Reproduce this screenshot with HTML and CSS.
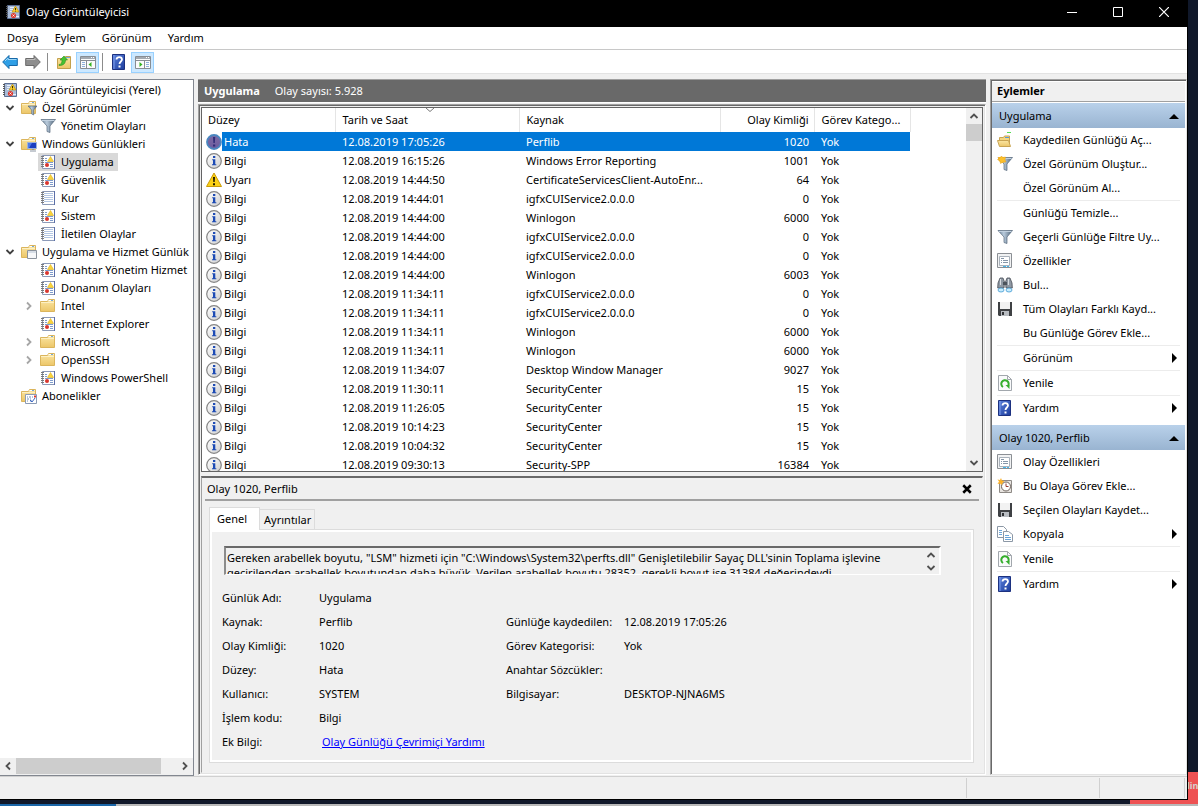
FILE: index.html
```html
<!DOCTYPE html>
<html lang="tr">
<head>
    <meta charset="UTF-8">
    <meta name="viewport" content="width=device-width, initial-scale=1.0">
    <title>Olay Görüntüleyicisi</title>
    <link rel="stylesheet" href="styles.css">
</head>
<body>
    <!-- Icon set -->
    <svg class="sprite" aria-hidden="true">
        <defs>
            <linearGradient id="gFolder" x1="0" y1="0" x2="0" y2="1"><stop offset="0" stop-color="#fbe6a4"/><stop offset="1" stop-color="#ecc668"/></linearGradient>
            <linearGradient id="gSteel" x1="0" y1="0" x2="1" y2="0"><stop offset="0" stop-color="#6d8296"/><stop offset=".4" stop-color="#b9cbdc"/><stop offset="1" stop-color="#4f6377"/></linearGradient>
            <linearGradient id="gBlue" x1="0" y1="0" x2="1" y2="1"><stop offset="0" stop-color="#5b82dc"/><stop offset="1" stop-color="#1c3c9c"/></linearGradient>
            <linearGradient id="gInfo" x1="0" y1="0" x2="1" y2="1"><stop offset="0" stop-color="#ffffff"/><stop offset="1" stop-color="#cfcfcf"/></linearGradient>
            <linearGradient id="gError" x1="0" y1="0" x2="0" y2="1"><stop offset="0" stop-color="#7d6ba6"/><stop offset="1" stop-color="#6b5a9e"/></linearGradient>
        </defs>
        <symbol id="viewer" viewBox="0 0 16 16">
            <path d="M2.500 1.500h12v13h-12z" fill="#a9bcd8" stroke="#5c6f93"/>
            <path d="M5 3.500h4M5 5.500h3M5 7.500h2M11 12.500h3" stroke="#e8effa"/>
            <path d="M1 2.500h2M1 4.500h2M1 6.500h2M1 8.500h2M1 10.500h2M1 12.500h2" stroke="#555"/>
            <path d="M10.500 2L14 8H7z" fill="#fbd02c" stroke="#b98b0a" stroke-width=".6"/>
            <path d="M10.500 4v2M10.500 6.700v.8" stroke="#3b2e00"/>
            <circle cx="8.500" cy="11.500" r="2.600" fill="#dc3c31"/>
            <path d="M7.500 10.500l2 2m0-2l-2 2" stroke="#fff" stroke-width=".8"/>
        </symbol>
        <symbol id="log" viewBox="0 0 16 16">
            <path d="M2.500 1.500h12v13h-12z" fill="#fff" stroke="#8c9ab8"/>
            <path d="M14.500 1v14" stroke="#5b6fa8"/>
            <path d="M4 3.500h9M4 5.500h9M4 7.500h9M4 9.500h9M4 11.500h9" stroke="#b4c7e4"/>
            <path d="M1 2.500h3M1 4.500h3M1 6.500h3M1 8.500h3M1 10.500h3M1 12.500h3" stroke="#7a7a7a"/>
        </symbol>
        <symbol id="logAlert" viewBox="0 0 16 16">
            <path d="M2.500 1.500h12v13h-12z" fill="#fff" stroke="#8c9ab8"/>
            <path d="M14.500 1v14" stroke="#5b6fa8"/>
            <path d="M5 4.500h2M5 6.500h2M5 8.500h8M10 10.500h3M10 12.500h3" stroke="#7f9ccc"/>
            <path d="M1 2.500h3M1 4.500h3M1 6.500h3M1 8.500h3M1 10.500h3M1 12.500h3" stroke="#7a7a7a"/>
            <path d="M10.500 2.500L13.500 7.500H7.500z" fill="#fbd53a" stroke="#d9ad22" stroke-width=".6"/>
            <circle cx="7" cy="11" r="2" fill="#d9362d"/>
        </symbol>
        <symbol id="folder" viewBox="0 0 16 16">
            <path d="M.500 3.500h7l1-2h6v12h-14z" fill="url(#gFolder)" stroke="#dbb55c"/>
            <path d="M8.500 2.500h5" stroke="#fff"/><path d="M11 2.500h2" stroke="#74a8d8"/>
            <path d="M1 4.500h13" stroke="#fdf0c4"/>
        </symbol>
        <symbol id="funnel" viewBox="0 0 16 16">
            <path d="M1 1.500h14.500L10 8v6.500l-3-1V8z" fill="url(#gSteel)" stroke="#56697c" stroke-width=".7"/>
            <path d="M2 2.500h12.500" stroke="#c3d2e0"/>
        </symbol>
        <symbol id="folderFunnel" viewBox="0 0 16 16">
            <use href="#folder"/>
            <path d="M7 6h9l-3.300 4v5l-2-1v-4z" fill="url(#gSteel)" stroke="#4f6377" stroke-width=".6"/>
        </symbol>
        <symbol id="folderScreen" viewBox="0 0 16 16">
            <use href="#folder"/>
            <path d="M6.500 6.500h9v6h-9z" fill="#1b3fc0" stroke="#9fb4d8"/>
            <path d="M7 7h4l-3 5H7z" fill="#4e7bea"/>
            <path d="M9 15h6M11 13.500h2" stroke="#8c96a3"/>
        </symbol>
        <symbol id="folderWindow" viewBox="0 0 16 16">
            <use href="#folder"/>
            <path d="M6.500 6.500h9v8h-9z" fill="#f7f8fa" stroke="#8b939d"/>
            <path d="M7 8h8" stroke="#b7c3d2"/>
        </symbol>
        <symbol id="folderSub" viewBox="0 0 16 16">
            <use href="#folder"/>
            <path d="M4.500 6.500h11v9h-11z" fill="#fff" stroke="#8b9bb5"/>
            <path d="M6 9h1m1 0h2m1 0h1M6 11h2m1 0h1M6 13h1m2 0h2" stroke="#6f8dbb"/>
            <path d="M13 7.500h2v2h-2z" fill="#df3b30"/>
            <path d="M9 12l2 2 3-4" fill="none" stroke="#3a66c4"/>
        </symbol>
        <symbol id="arrowLeft" viewBox="0 0 16 16">
            <path d="M.7 8L7 1.500v3h8.300v7H7v3z" fill="#2f9fe6" stroke="#1668a8"/><path d="M3 7L6 4v1.500h8.500" fill="none" stroke="#9fd8f8"/>
        </symbol>
        <symbol id="arrowRight" viewBox="0 0 16 16">
            <path d="M15.300 8L9 1.500v3H.7v7H9v3z" fill="#8e8e8e" stroke="#6b6b6b"/><path d="M1.500 5.500H10V4" fill="none" stroke="#bdbdbd"/>
        </symbol>
        <symbol id="folderUp" viewBox="0 0 16 16">
            <path d="M1.500 4.500h7l1-2h5v12h-13z" fill="url(#gFolder)" stroke="#c3a04c"/>
            <path d="M10 3.500h4" stroke="#74a8d8"/>
            <path d="M3 10.500c2.500 0 3-2 3-4.500H4L8 2l3.500 4H9.500c0 3.500-2 5.500-6.500 5.500z" fill="#45c233" stroke="#2b8d1f" stroke-width=".6"/>
        </symbol>
        <symbol id="paneLeft" viewBox="0 0 16 16">
            <path d="M.5 2.500h15v12H.5z" fill="#fbfbfb" stroke="#878d94"/><path d="M1 4h14" stroke="#a3a9b0" stroke-width="2"/>
            <path d="M11 3.500h1m1 0h1" stroke="#fff"/><path d="M1 6.500h14M6.500 6v8" stroke="#878d94"/>
            <path d="M2 8.500h3M2 10.500h3M2 12.500h3" stroke="#8db0dc"/><path d="M11.500 8v5l-3-2.500z" fill="#34b321"/>
        </symbol>
        <symbol id="paneRight" viewBox="0 0 16 16">
            <path d="M.5 2.500h15v12H.5z" fill="#fbfbfb" stroke="#878d94"/><path d="M1 4h14" stroke="#a3a9b0" stroke-width="2"/>
            <path d="M11 3.500h1m1 0h1" stroke="#fff"/><path d="M1 6.500h14M9.500 6v8" stroke="#878d94"/>
            <path d="M11 8.500h3M11 10.500h3M11 12.500h3" stroke="#8db0dc"/><path d="M4.500 8v5l3-2.500z" fill="#34b321"/>
        </symbol>
        <symbol id="help" viewBox="0 0 16 16">
            <path d="M1.500.5h12v15h-12z" fill="url(#gBlue)" stroke="#1c3180"/><path d="M3 1v14" stroke="#7d9ceb"/>
            <path d="M5.500 5.500c0-3.300 5.500-3.300 5.500 0 0 2-2.500 2-2.500 4.500" fill="none" stroke="#fff" stroke-width="1.800"/><path d="M7.500 11.500h2v2h-2z" fill="#fff"/>
        </symbol>
        <symbol id="info" viewBox="0 0 16 16">
            <circle cx="8" cy="8" r="7.300" fill="url(#gInfo)" stroke="#858585" stroke-width="1.200"/>
            <path d="M7 3h2.300v2H7zM6.200 6.300h3.100v5h1v1H6v-1h1V7.300h-.8z" fill="#1d4bb5"/>
        </symbol>
        <symbol id="error" viewBox="0 0 16 16">
            <circle cx="8" cy="8" r="7" fill="url(#gError)" stroke="#4a86bf" stroke-width="1.800"/>
            <path d="M7 3h2.200l-.4 6H7.400zM7 10.500h2.200v2H7z" fill="#2f2c78"/>
        </symbol>
        <symbol id="warning" viewBox="0 0 16 16">
            <path d="M8 1L15.500 14.500H.5z" fill="#fcd116" stroke="#c99a0a" stroke-linejoin="round"/>
            <path d="M7 5h2l-.3 5H7.300zM7 11.200h2v2H7z" fill="#221b00"/>
        </symbol>
        <symbol id="openLog" viewBox="0 0 16 16">
            <path d="M2.500 5.500h4l1-1.500h5v7h-10z" fill="#f5d680" stroke="#c9a453"/><path d="M8 5.500h4" stroke="#5a9ad8"/>
            <path d="M.5 8.500h11l2 6H2.500z" fill="url(#gFolder)" stroke="#c9a453"/><path d="M10 .5h4" stroke="#54dd54"/>
        </symbol>
        <symbol id="newView" viewBox="0 0 16 16">
            <use href="#funnel"/>
            <path d="M1 1h7v5l-2.500 1L3 6 1.500 4z" fill="#fbb72a"/>
            <path d="M4.500 0l1.300 1.500L8.500 1 8 3.700 9 6 6 6 3.500 7.500 3 5 .5 3.500l2-1.200z" fill="#fcc02c" stroke="#e0a020" stroke-width=".5"/>
        </symbol>
        <symbol id="props" viewBox="0 0 16 16">
            <path d="M.5.500h14v14H.5z" fill="#f1f2f3" stroke="#8b8f94" stroke-width="1"/><path d="M2.500 3.500h10v9h-10z" fill="#fff" stroke="#aab2bb"/>
            <path d="M4 5.500h3M4 7.500h1m1 0h5M4 9.500h1m1 0h5" stroke="#8696a8"/><path d="M6 13.500h3m1 0h2" stroke="#43b5ea"/>
        </symbol>
        <symbol id="find" viewBox="0 0 16 16">
            <path d="M3 1h3l1.500 4L7 11H.7L1 6zM10 1h3l2 5 .3 5H9l-.5-6z" fill="#8f98a3" stroke="#474d55" stroke-width=".8"/>
            <path d="M3.500 2v6M11.500 2v6" stroke="#d9dde2"/><path d="M6 5h4v3H6z" fill="#4c535c"/>
            <ellipse cx="4" cy="13" rx="3" ry="2" fill="#c8ecfd" stroke="#449bd2" stroke-width=".8"/><ellipse cx="12" cy="13" rx="3" ry="2" fill="#c8ecfd" stroke="#449bd2" stroke-width=".8"/>
        </symbol>
        <symbol id="save" viewBox="0 0 16 16">
            <path d="M1 1h14v14H2l-1-1z" fill="#3f4144"/><path d="M3 1h10v7H3z" fill="#f2f2f2"/><path d="M4 10h8v5H4z" fill="#b9bdc2"/><path d="M5 11h2v3H5z" fill="#303235"/>
        </symbol>
        <symbol id="refresh" viewBox="0 0 16 16">
            <path d="M1.500.5h9l4 4v11h-13z" fill="#f9fafb" stroke="#a2a7ad"/><path d="M10.500.5v4h4" fill="none" stroke="#a2a7ad"/>
            <path d="M6 12A3.700 3.700 0 1 1 11 11" fill="none" stroke="#35ae2d" stroke-width="2"/><path d="M8.500 10h4v4z" fill="#35ae2d"/>
        </symbol>
        <symbol id="task" viewBox="0 0 16 16">
            <path d="M2.500 2.500h12v12h-12z" fill="#e7e3df" stroke="#8e8a86"/><circle cx="9" cy="8.500" r="4.500" fill="#fff" stroke="#6c625c"/>
            <path d="M9 5.500v3h2.500" fill="none" stroke="#9b3d31"/><path d="M4 0l1 2.500L7.500 3 5.500 5 5 7 3 5.500.5 6 2 3.500.5 1.500 3 2z" fill="#fbb12a"/>
        </symbol>
        <symbol id="copy" viewBox="0 0 16 16">
            <path d="M.5.500h6l3 3v8h-9z" fill="#fff" stroke="#8c98a6"/><path d="M2 4.500h3M2 6.500h3M2 8.500h3" stroke="#6ba5d8"/>
            <path d="M6.500 5.500h5l4 3v7h-9z" fill="#fff" stroke="#8c98a6"/><path d="M8 9.500h4M8 11.500h6M8 13.500h6" stroke="#6ba5d8"/>
        </symbol>
        <symbol id="chevron" viewBox="0 0 10 10"><path d="M1.500 3l3.500 3.500L8.500 3" fill="none" stroke="currentColor" stroke-width="1.800"/></symbol>
        <symbol id="triUp" viewBox="0 0 10 10"><path d="M0 8l5-5 5 5z" fill="#000"/></symbol>
        <symbol id="triRight" viewBox="0 0 10 10"><path d="M3 0l5 5-5 5z" fill="#000"/></symbol>
    </svg>

    <!-- Desktop behind the window -->
    <div class="desktop-toast">din</div>
    <div class="desktop-strip"></div>

    <div class="window">
        <header class="titlebar">
            <svg class="icon"><use href="#viewer"/></svg>
            <h1>Olay Görüntüleyicisi</h1>
            <button class="win-btn" aria-label="Simge durumuna küçült"><svg viewBox="0 0 10 10"><path d="M0 5.500h10" stroke="#fff"/></svg></button>
            <button class="win-btn" aria-label="Ekranı kapla"><svg viewBox="0 0 10 10"><path d="M.5.500h9v9h-9z" fill="none" stroke="#fff"/></svg></button>
            <button class="win-btn" aria-label="Kapat"><svg viewBox="0 0 10 10"><path d="M0 0l10 10M10 0L0 10" stroke="#fff" stroke-width="1.200"/></svg></button>
        </header>

        <nav class="menubar">
            <button>Dosya</button>
            <button>Eylem</button>
            <button>Görünüm</button>
            <button>Yardım</button>
        </nav>

        <div class="toolbar">
            <button class="tool" aria-label="Geri"><svg class="icon"><use href="#arrowLeft"/></svg></button>
            <button class="tool" aria-label="İleri"><svg class="icon"><use href="#arrowRight"/></svg></button>
            <span class="tool-sep"></span>
            <button class="tool" aria-label="Yukarı"><svg class="icon"><use href="#folderUp"/></svg></button>
            <button class="tool on" aria-label="Konsol ağacı"><svg class="icon"><use href="#paneLeft"/></svg></button>
            <span class="tool-sep"></span>
            <button class="tool" aria-label="Yardım"><svg class="icon"><use href="#help"/></svg></button>
            <button class="tool on" aria-label="Eylem bölmesi"><svg class="icon"><use href="#paneRight"/></svg></button>
        </div>

        <main>
            <!-- Console tree -->
            <aside class="tree">
                <ul>
                    <li class="root"><svg class="icon"><use href="#viewer"/></svg><span>Olay Görüntüleyicisi (Yerel)</span></li>
                    <li class="l1"><svg class="exp"><use href="#chevron"/></svg><svg class="icon"><use href="#folderFunnel"/></svg><span>Özel Görünümler</span></li>
                    <li class="l2"><svg class="icon"><use href="#funnel"/></svg><span>Yönetim Olayları</span></li>
                    <li class="l1"><svg class="exp"><use href="#chevron"/></svg><svg class="icon"><use href="#folderScreen"/></svg><span>Windows Günlükleri</span></li>
                    <li class="l2 selected"><svg class="icon"><use href="#logAlert"/></svg><span>Uygulama</span></li>
                    <li class="l2"><svg class="icon"><use href="#logAlert"/></svg><span>Güvenlik</span></li>
                    <li class="l2"><svg class="icon"><use href="#log"/></svg><span>Kur</span></li>
                    <li class="l2"><svg class="icon"><use href="#logAlert"/></svg><span>Sistem</span></li>
                    <li class="l2"><svg class="icon"><use href="#log"/></svg><span>İletilen Olaylar</span></li>
                    <li class="l1"><svg class="exp"><use href="#chevron"/></svg><svg class="icon"><use href="#folderWindow"/></svg><span>Uygulama ve Hizmet Günlük</span></li>
                    <li class="l2"><svg class="icon"><use href="#logAlert"/></svg><span>Anahtar Yönetim Hizmet</span></li>
                    <li class="l2"><svg class="icon"><use href="#logAlert"/></svg><span>Donanım Olayları</span></li>
                    <li class="l2 closed"><svg class="exp"><use href="#chevron"/></svg><svg class="icon"><use href="#folder"/></svg><span>Intel</span></li>
                    <li class="l2"><svg class="icon"><use href="#logAlert"/></svg><span>Internet Explorer</span></li>
                    <li class="l2 closed"><svg class="exp"><use href="#chevron"/></svg><svg class="icon"><use href="#folder"/></svg><span>Microsoft</span></li>
                    <li class="l2 closed"><svg class="exp"><use href="#chevron"/></svg><svg class="icon"><use href="#folder"/></svg><span>OpenSSH</span></li>
                    <li class="l2"><svg class="icon"><use href="#logAlert"/></svg><span>Windows PowerShell</span></li>
                    <li class="l1 leaf"><svg class="icon"><use href="#folderSub"/></svg><span>Abonelikler</span></li>
                </ul>
                <div class="hscroll">
                    <button aria-label="Sola kaydır"><svg class="arrow left"><use href="#chevron"/></svg></button>
                    <div class="track"><div class="thumb"></div></div>
                    <button aria-label="Sağa kaydır"><svg class="arrow right"><use href="#chevron"/></svg></button>
                </div>
            </aside>

            <!-- Event list and preview -->
            <section class="center">
                <h2 class="center-title"><b>Uygulama</b> <span>Olay sayısı: 5.928</span></h2>
                <div class="frame">
                    <div class="list">
                        <div class="list-body">
                            <table>
                                <thead>
                                    <tr>
                                        <th class="c-level">Düzey</th>
                                        <th class="c-date">Tarih ve Saat<svg class="sort" viewBox="0 0 8 4"><path d="M0 0l4 3.500L8 0" fill="none" stroke="#777"/></svg></th>
                                        <th class="c-source">Kaynak</th>
                                        <th class="c-id">Olay Kimliği</th>
                                        <th class="c-cat">Görev Katego...</th>
                                    </tr>
                                </thead>
                                <tbody>
                                    <tr class="selected"><td><svg class="icon"><use href="#error"/></svg>Hata</td><td>12.08.2019 17:05:26</td><td>Perflib</td><td>1020</td><td>Yok</td></tr>
                                    <tr><td><svg class="icon"><use href="#info"/></svg>Bilgi</td><td>12.08.2019 16:15:26</td><td>Windows Error Reporting</td><td>1001</td><td>Yok</td></tr>
                                    <tr><td><svg class="icon"><use href="#warning"/></svg>Uyarı</td><td>12.08.2019 14:44:50</td><td>CertificateServicesClient-AutoEnr...</td><td>64</td><td>Yok</td></tr>
                                    <tr><td><svg class="icon"><use href="#info"/></svg>Bilgi</td><td>12.08.2019 14:44:01</td><td>igfxCUIService2.0.0.0</td><td>0</td><td>Yok</td></tr>
                                    <tr><td><svg class="icon"><use href="#info"/></svg>Bilgi</td><td>12.08.2019 14:44:00</td><td>Winlogon</td><td>6000</td><td>Yok</td></tr>
                                    <tr><td><svg class="icon"><use href="#info"/></svg>Bilgi</td><td>12.08.2019 14:44:00</td><td>igfxCUIService2.0.0.0</td><td>0</td><td>Yok</td></tr>
                                    <tr><td><svg class="icon"><use href="#info"/></svg>Bilgi</td><td>12.08.2019 14:44:00</td><td>igfxCUIService2.0.0.0</td><td>0</td><td>Yok</td></tr>
                                    <tr><td><svg class="icon"><use href="#info"/></svg>Bilgi</td><td>12.08.2019 14:44:00</td><td>Winlogon</td><td>6003</td><td>Yok</td></tr>
                                    <tr><td><svg class="icon"><use href="#info"/></svg>Bilgi</td><td>12.08.2019 11:34:11</td><td>igfxCUIService2.0.0.0</td><td>0</td><td>Yok</td></tr>
                                    <tr><td><svg class="icon"><use href="#info"/></svg>Bilgi</td><td>12.08.2019 11:34:11</td><td>igfxCUIService2.0.0.0</td><td>0</td><td>Yok</td></tr>
                                    <tr><td><svg class="icon"><use href="#info"/></svg>Bilgi</td><td>12.08.2019 11:34:11</td><td>Winlogon</td><td>6000</td><td>Yok</td></tr>
                                    <tr><td><svg class="icon"><use href="#info"/></svg>Bilgi</td><td>12.08.2019 11:34:11</td><td>Winlogon</td><td>6000</td><td>Yok</td></tr>
                                    <tr><td><svg class="icon"><use href="#info"/></svg>Bilgi</td><td>12.08.2019 11:34:07</td><td>Desktop Window Manager</td><td>9027</td><td>Yok</td></tr>
                                    <tr><td><svg class="icon"><use href="#info"/></svg>Bilgi</td><td>12.08.2019 11:30:11</td><td>SecurityCenter</td><td>15</td><td>Yok</td></tr>
                                    <tr><td><svg class="icon"><use href="#info"/></svg>Bilgi</td><td>12.08.2019 11:26:05</td><td>SecurityCenter</td><td>15</td><td>Yok</td></tr>
                                    <tr><td><svg class="icon"><use href="#info"/></svg>Bilgi</td><td>12.08.2019 10:14:23</td><td>SecurityCenter</td><td>15</td><td>Yok</td></tr>
                                    <tr><td><svg class="icon"><use href="#info"/></svg>Bilgi</td><td>12.08.2019 10:04:32</td><td>SecurityCenter</td><td>15</td><td>Yok</td></tr>
                                    <tr><td><svg class="icon"><use href="#info"/></svg>Bilgi</td><td>12.08.2019 09:30:13</td><td>Security-SPP</td><td>16384</td><td>Yok</td></tr>
                                </tbody>
                            </table>
                        </div>
                        <div class="vscroll">
                            <button aria-label="Yukarı kaydır"><svg class="arrow up"><use href="#chevron"/></svg></button>
                            <div class="track"><div class="thumb"></div></div>
                            <button aria-label="Aşağı kaydır"><svg class="arrow"><use href="#chevron"/></svg></button>
                        </div>
                    </div>

                    <div class="detail">
                        <div class="detail-head">
                            <h3>Olay 1020, Perflib</h3>
                            <button aria-label="Kapat"><svg viewBox="0 0 8 8"><path d="M1 1l6 6M7 1L1 7" stroke="#000" stroke-width="2"/></svg></button>
                        </div>
                        <div class="tabs">
                            <button class="tab active">Genel</button>
                            <button class="tab">Ayrıntılar</button>
                        </div>
                        <div class="tab-page">
                            <div class="message">
                                <textarea aria-label="Açıklama" readonly>Gereken arabellek boyutu, "LSM" hizmeti için "C:\Windows\System32\perfts.dll" Genişletilebilir Sayaç DLL'sinin Toplama işlevine geçirilenden arabellek boyutundan daha büyük. Verilen arabellek boyutu 28352, gerekli boyut ise 31384 değerindeydi.</textarea>
                                <div class="vscroll">
                                    <button aria-label="Yukarı kaydır"><svg class="arrow up"><use href="#chevron"/></svg></button>
                                    <button aria-label="Aşağı kaydır"><svg class="arrow"><use href="#chevron"/></svg></button>
                                </div>
                            </div>
                            <div class="fields">
                                <span>Günlük Adı:</span><span class="wide">Uygulama</span>
                                <span>Kaynak:</span><span>Perflib</span><span>Günlüğe kaydedilen:</span><span>12.08.2019 17:05:26</span>
                                <span>Olay Kimliği:</span><span>1020</span><span>Görev Kategorisi:</span><span>Yok</span>
                                <span>Düzey:</span><span>Hata</span><span>Anahtar Sözcükler:</span><span></span>
                                <span>Kullanıcı:</span><span>SYSTEM</span><span>Bilgisayar:</span><span>DESKTOP-NJNA6MS</span>
                                <span>İşlem kodu:</span><span class="wide">Bilgi</span>
                                <span>Ek Bilgi:</span><span class="wide"><a href="#">Olay Günlüğü Çevrimiçi Yardımı</a></span>
                            </div>
                        </div>
                    </div>
                </div>
            </section>

            <!-- Actions -->
            <aside class="actions">
                <h2>Eylemler</h2>
                <h3>Uygulama<svg class="tri"><use href="#triUp"/></svg></h3>
                <button class="act"><svg class="icon"><use href="#openLog"/></svg><span>Kaydedilen Günlüğü Aç...</span></button>
                <button class="act"><svg class="icon"><use href="#newView"/></svg><span>Özel Görünüm Oluştur...</span></button>
                <button class="act noicon"><span>Özel Görünüm Al...</span></button>
                <hr>
                <button class="act noicon"><span>Günlüğü Temizle...</span></button>
                <button class="act"><svg class="icon"><use href="#funnel"/></svg><span>Geçerli Günlüğe Filtre Uy...</span></button>
                <button class="act"><svg class="icon"><use href="#props"/></svg><span>Özellikler</span></button>
                <button class="act"><svg class="icon"><use href="#find"/></svg><span>Bul...</span></button>
                <button class="act"><svg class="icon"><use href="#save"/></svg><span>Tüm Olayları Farklı Kayd...</span></button>
                <button class="act noicon"><span>Bu Günlüğe Görev Ekle...</span></button>
                <hr>
                <button class="act noicon"><span>Görünüm</span><svg class="tri"><use href="#triRight"/></svg></button>
                <hr>
                <button class="act"><svg class="icon"><use href="#refresh"/></svg><span>Yenile</span></button>
                <hr>
                <button class="act"><svg class="icon"><use href="#help"/></svg><span>Yardım</span><svg class="tri"><use href="#triRight"/></svg></button>
                <h3 class="second">Olay 1020, Perflib<svg class="tri"><use href="#triUp"/></svg></h3>
                <button class="act"><svg class="icon"><use href="#props"/></svg><span>Olay Özellikleri</span></button>
                <button class="act"><svg class="icon"><use href="#task"/></svg><span>Bu Olaya Görev Ekle...</span></button>
                <button class="act"><svg class="icon"><use href="#save"/></svg><span>Seçilen Olayları Kaydet...</span></button>
                <button class="act"><svg class="icon"><use href="#copy"/></svg><span>Kopyala</span><svg class="tri"><use href="#triRight"/></svg></button>
                <hr>
                <button class="act"><svg class="icon"><use href="#refresh"/></svg><span>Yenile</span></button>
                <hr>
                <button class="act"><svg class="icon"><use href="#help"/></svg><span>Yardım</span><svg class="tri"><use href="#triRight"/></svg></button>
            </aside>
        </main>

        <footer class="statusbar">
            <div class="grow"></div>
            <div class="cell"></div>
            <div class="cell small"></div>
        </footer>
    </div>
</body>
</html>
```
FILE: styles.css
```css
* {
    box-sizing: border-box;
}

body {
    margin: 0;
    height: 100vh;
    padding: 0 10px 6px 0;
    overflow: hidden;
    position: relative;
    background-color: #10182a;
    font-family: "Noto Sans", "Open Sans", sans-serif;
    font-size: 11px;
    line-height: 16px;
    color: #000;
}

h1, h2, h3 {
    margin: 0;
    font-size: 11px;
    font-weight: normal;
}

button {
    margin: 0;
    padding: 0;
    border: 0;
    background: none;
    color: inherit;
    font: inherit;
}

.sprite {
    position: absolute;
    width: 0;
    height: 0;
}

.icon {
    flex: none;
    width: 16px;
    height: 16px;
}

/* desktop */
.desktop-toast {
    position: absolute;
    right: 0;
    bottom: 2px;
    width: 68px;
    height: 32px;
    overflow: hidden;
    padding: 6px 0 0 54px;
    background-color: #ee5253;
    color: #d5cfcf;
    font-size: 9px;
    font-weight: bold;
}

.desktop-strip {
    position: absolute;
    left: 0;
    right: 0;
    bottom: 0;
    height: 2px;
    background: linear-gradient(to right, #1a66a8 116px, #b8b8b8 116px);
}

/* window */
.window {
    position: relative;
    display: flex;
    flex-direction: column;
    height: 100%;
    border-right: 1px solid #000;
    border-bottom: 1px solid #000;
    background-color: #f0f0f0;
}

.titlebar {
    display: flex;
    align-items: center;
    height: 27px;
    padding: 0 0 3px 5px;
    background-color: #000;
    color: #fff;
}

.titlebar h1 {
    flex: 1;
    margin-left: 5px;
}

.win-btn {
    display: flex;
    align-items: center;
    justify-content: center;
    width: 46px;
    height: 24px;
}

.win-btn svg {
    width: 10px;
    height: 10px;
}

.menubar {
    display: flex;
    gap: 16px;
    height: 23px;
    padding: 0 7px;
    border-bottom: 1px solid #c8c8c8;
    background-color: #fff;
}

.toolbar {
    display: flex;
    align-items: center;
    height: 24px;
    padding-top: 1px;
    border-bottom: 1px solid #e3e3e3;
    background-color: #fff;
}

.tool {
    display: flex;
    align-items: center;
    justify-content: center;
    width: 23px;
    height: 21px;
    margin-right: 1px;
}

.tool:first-child {
    width: 20px;
}

.tool.on {
    border: 1px solid #99d1ff;
    background-color: #cce8ff;
}

.tool-sep {
    width: 1px;
    height: 18px;
    margin: 0 4px 0 2px;
    background-color: #8c8c8c;
}

main {
    display: flex;
    flex: 1;
    min-height: 0;
    padding-top: 5px;
}

/* scroll bars */
.arrow {
    display: block;
    width: 10px;
    height: 10px;
    color: #505050;
}

.arrow.up {
    transform: rotate(180deg);
}

.arrow.left {
    transform: rotate(90deg);
}

.arrow.right {
    transform: rotate(270deg);
}

.hscroll, .vscroll {
    display: flex;
    background-color: #f0f0f0;
}

.hscroll {
    padding-bottom: 1px;
}

.vscroll {
    flex: none;
    flex-direction: column;
    width: 16px;
}

.hscroll button, .vscroll button {
    display: flex;
    align-items: center;
    justify-content: center;
    width: 16px;
    height: 16px;
}

.track {
    flex: 1;
}

.thumb {
    background-color: #cdcdcd;
}

.hscroll .thumb {
    width: 90%;
    height: 16px;
}

.vscroll .thumb {
    height: 17px;
}

/* tree */
.tree {
    display: flex;
    flex-direction: column;
    flex: none;
    width: 194px;
    border: 1px solid #828790;
    border-left: 0;
    background-color: #fff;
    overflow: hidden;
}

.tree ul {
    flex: 1;
    margin: 0;
    padding: 1px 0 0;
    list-style: none;
    overflow: hidden;
}

.tree li {
    display: flex;
    align-items: center;
    height: 18px;
    white-space: nowrap;
}

.tree li span {
    padding: 0 4px 0 5px;
}

.root {
    padding-left: 2px;
}

.l1 {
    padding-left: 5px;
}

.l1.leaf {
    padding-left: 21px;
}

.l2 {
    padding-left: 40px;
}

.l2.closed {
    padding-left: 24px;
}

.exp {
    flex: none;
    width: 10px;
    height: 10px;
    margin-right: 6px;
    color: #404040;
}

.closed .exp {
    color: #a6a6a6;
    transform: rotate(270deg);
}

.tree .selected {
    width: fit-content;
    margin-left: 38px;
    padding-left: 2px;
    background-color: #d9d9d9;
}

/* center */
.center {
    display: flex;
    flex-direction: column;
    flex: 1;
    min-width: 0;
    margin: 0 4px 1px;
}

.center-title {
    height: 24px;
    padding: 3px 6px;
    border-top: 1px solid #a0a0a0;
    border-bottom: 1px solid #fff;
    background-color: #696969;
    color: #fff;
}

.center-title span {
    margin-left: 12px;
}

.frame {
    display: flex;
    flex-direction: column;
    flex: 1;
    min-height: 0;
    margin-top: 1px;
    padding: 2px 2px 1px 2px;
    border: 1px solid;
    border-color: #a0a0a0 #fff #fff #a0a0a0;
    box-shadow: inset 1px 1px 0 #696969, inset -1px -1px 0 #e3e3e3;
}

.list {
    display: flex;
    flex: 1;
    min-height: 0;
    border: 1px solid #646464;
    background-color: #fff;
}

.list-body {
    flex: 1;
    min-width: 0;
    overflow: hidden;
}

table {
    table-layout: fixed;
    width: 708px;
    border-collapse: collapse;
}

th, td {
    height: 19px;
    padding: 0 5px 0 7px;
    overflow: hidden;
    font-weight: normal;
    line-height: 16px;
    text-align: left;
    white-space: nowrap;
}

th {
    position: relative;
    height: 24px;
    border-right: 1px solid #e5e5e5;
}

.c-level {
    width: 133px;
    padding-left: 6px;
}

.c-date {
    width: 184px;
}

.c-source {
    width: 201px;
}

.c-id {
    width: 94px;
}

.c-cat {
    width: 96px;
    padding-right: 0;
}

.c-id, td:nth-child(4) {
    text-align: right;
}

.sort {
    position: absolute;
    top: 0;
    left: 90px;
    width: 8px;
    height: 4px;
}

td:first-child {
    padding-left: 4px;
}

td .icon {
    margin-right: 2px;
    vertical-align: top;
}

tbody .selected td {
    background-color: #0078d7;
    color: #fff;
}

tbody .selected td:first-child {
    background: linear-gradient(to right, #fff 20px, #0078d7 20px);
}

/* detail */
.detail {
    flex: none;
    margin-top: 4px;
    padding: 0 3px 9px;
    border: 2px solid;
    border-color: #696969 #f0f0f0 #f0f0f0 #a0a0a0;
    border-width: 2px 1px 1px 1px;
}

.detail-head {
    display: flex;
    align-items: center;
    justify-content: space-between;
    height: 23px;
    padding: 0 7px 0 2px;
    border-bottom: 2px solid #a0a0a0;
}

.detail-head button {
    width: 10px;
    height: 10px;
}

.detail-head svg {
    display: block;
    width: 10px;
    height: 10px;
}

.tabs {
    display: flex;
    align-items: flex-end;
    height: 28px;
    padding: 6px 4px 0;
}

.tab {
    height: 20px;
    padding: 0 3px 0 4px;
    border: 1px solid #dcdcdc;
    border-bottom: 0;
    border-left: 0;
}

.tab.active {
    position: relative;
    height: 23px;
    margin-bottom: -1px;
    padding: 0 12px 1px 7px;
    border-left: 1px solid #dcdcdc;
    background-color: #fff;
}

.tab-page {
    margin: 0 5px 0 4px;
    padding: 16px 32px 8px 12px;
    border: 1px solid #dcdcdc;
    box-shadow: inset 0 0 0 2px #fff;
}

.message {
    display: flex;
    height: 29px;
    border: 2px solid;
    border-color: #696969 #fff #fff #8c8c8c;
    border-width: 2px 2px 1px 2px;
    margin-left: 2px;
}

.message textarea {
    flex: 1;
    min-width: 0;
    height: 26px;
    margin: 0;
    padding: 2px 0 0 1px;
    border: 0;
    outline: 0;
    overflow: hidden;
    resize: none;
    background: none;
    color: inherit;
    font: inherit;
    line-height: 15px;
}

.message .vscroll button {
    height: 13px;
}

.fields {
    display: grid;
    grid-template-columns: 97px 187px 118px 1fr;
    grid-auto-rows: 24px;
    align-items: center;
    margin-top: 11px;
}

.fields .wide {
    grid-column: span 3;
}

.fields a {
    margin-left: 3px;
    color: #0000ff;
}

/* actions */
.actions {
    flex: none;
    width: 197px;
    margin-bottom: 1px;
    border: 1px solid;
    border-color: #a0a0a0 #e3e3e3 #e3e3e3 #a0a0a0;
    box-shadow: inset 1px 1px 0 #696969;
    padding: 2px 1px 0 1px;
    background-color: #fff;
    overflow: hidden;
}

.actions h2 {
    height: 20px;
    padding: 1px 5px;
    border-bottom: 1px solid #a0a0a0;
    background-color: #f0f0f0;
    font-weight: bold;
}

.actions h3 {
    display: flex;
    align-items: center;
    justify-content: space-between;
    height: 25px;
    margin-top: 1px;
    padding: 0 6px 0 7px;
    background: linear-gradient(#b9d1ea, #99b4d1);
}

.actions h3.second {
    margin-top: 5px;
}

.act {
    display: flex;
    align-items: center;
    width: 100%;
    height: 24px;
    padding: 0 6px 0 5px;
    text-align: left;
}

.act span {
    flex: 1;
    margin-left: 10px;
    white-space: nowrap;
}

.act.noicon span {
    margin-left: 26px;
}

.tri {
    flex: none;
    width: 10px;
    height: 10px;
}

.actions hr {
    height: 1px;
    margin: 0 5px;
    border: 0;
    background-color: #ececec;
}

/* status bar */
.statusbar {
    display: flex;
    height: 23px;
    padding: 1px 2px 1px 0;
    border-top: 1px solid #d0d0d0;
}

.statusbar div {
    border-right: 1px solid #d0d0d0;
}

.grow {
    flex: 1;
}

.cell {
    width: 133px;
}

.cell.small {
    width: 85px;
}
```
